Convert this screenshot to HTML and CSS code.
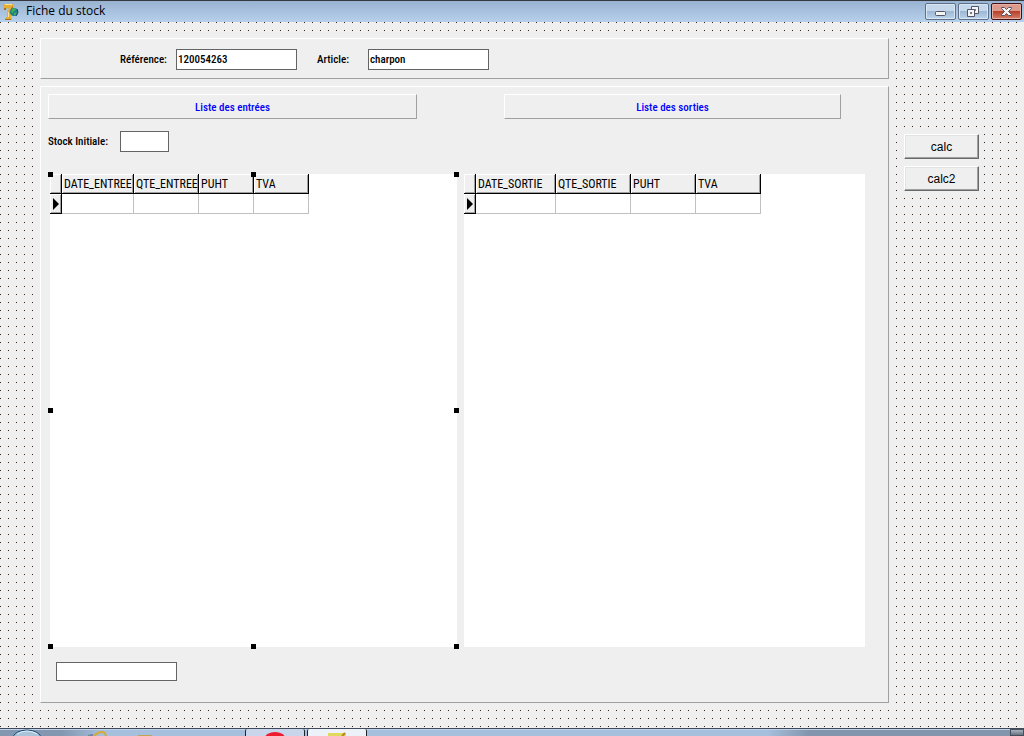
FILE: index.html
```html
<!DOCTYPE html>
<html lang="fr">
<head>
<meta charset="utf-8">
<title>Fiche du stock</title>
<link rel="stylesheet" href="styles.css">
</head>
<body>
<header class="titlebar">
  <svg class="app-icon" width="16" height="18" viewBox="0 0 16 18" aria-hidden="true">
    <path d="M1 1h9v4L8 10v4l1 1v2H2v-2l2-1 0-5 2-4H4L1 7z" fill="#e6ad35"/>
    <path d="M1 5h2v2H1zM9 4l1-1v2l-3 5H6zM2 16h6v1H2z" fill="#a8701c"/>
    <path d="M2 1h7v1H2zM5 9h1v5H5z" fill="#ffe38c"/>
    <circle cx="11" cy="9" r="4" fill="#1d7f88"/>
    <path d="M9 6l3-1 1 2-2 1-1 2-2-1zM11 10l3-1-1 3-2 0z" fill="#3fae5a"/>
    <path d="M14 6l1 3-2 4" fill="none" stroke="#1c3f80"/>
  </svg>
  <h1 class="title">Fiche du stock</h1>
  <div class="window-buttons">
    <button class="win-btn" type="button" aria-label="Réduire">
      <svg width="29" height="15" viewBox="0 0 29 15"><rect x="9.500" y="7.500" width="10" height="4" rx="1" fill="#f4f4f4" stroke="#535666"/></svg>
    </button>
    <button class="win-btn" type="button" aria-label="Restaurer">
      <svg width="29" height="15" viewBox="0 0 29 15" fill="#f4f4f4" fill-rule="evenodd" stroke="#535666"><path d="M12.500 2.500h7v7h-7zM15.500 5.500h1v1h-1z"/><path d="M8.500 5.500h7v7h-7zM11.500 8.500h1v1h-1z"/></svg>
    </button>
    <button class="win-btn win-close" type="button" aria-label="Fermer">
      <svg width="29" height="15" viewBox="0 0 29 15"><path d="M9.500 3.500h3l2 2 2-2h3v1l-3 3 3 3v1h-3l-2-2-2 2h-3v-1l3-3-3-3z" fill="#f4f4f4" stroke="#535666"/></svg>
    </button>
  </div>
</header>

<main class="form">
  <div class="panels">
    <section class="panel article-panel">
      <label class="ref-label" for="ref">Référence:</label>
      <input class="field" id="ref" type="text" value="120054263">
      <label class="art-label" for="art">Article:</label>
      <input class="field" id="art" type="text" value="charpon">
    </section>

    <section class="panel stock-panel">
      <div class="banners">
        <h2 class="panel banner">Liste des entrées</h2>
        <h2 class="panel banner">Liste des sorties</h2>
      </div>
      <div class="initial">
        <label class="initial-label" for="initial">Stock Initiale:</label>
        <input class="field field-small" id="initial" type="text">
      </div>
      <div class="grids">
        <div class="grid">
          <table class="table">
            <thead><tr><th class="c12"></th><th class="c72">DATE_ENTREE</th><th class="c65">QTE_ENTREE</th><th class="c55">PUHT</th><th class="c55">TVA</th></tr></thead>
            <tbody><tr><th class="c12"><svg class="arrow" width="8" height="12" viewBox="0 0 8 12" aria-hidden="true"><path d="M1 0l6 6-6 6z"/></svg></th><td></td><td></td><td></td><td></td></tr></tbody>
          </table>
          <i class="handle top left"></i><i class="handle top center"></i><i class="handle top right"></i>
          <i class="handle middle left"></i><i class="handle middle right"></i>
          <i class="handle bottom left"></i><i class="handle bottom center"></i><i class="handle bottom right"></i>
        </div>
        <div class="grid">
          <table class="table">
            <thead><tr><th class="c12"></th><th class="c80">DATE_SORTIE</th><th class="c75">QTE_SORTIE</th><th class="c65">PUHT</th><th class="c65">TVA</th></tr></thead>
            <tbody><tr><th class="c12"><svg class="arrow" width="8" height="12" viewBox="0 0 8 12" aria-hidden="true"><path d="M1 0l6 6-6 6z"/></svg></th><td></td><td></td><td></td><td></td></tr></tbody>
          </table>
        </div>
      </div>
      <input class="field result" type="text" aria-label="Résultat">
    </section>
  </div>

  <div class="actions">
    <button class="btn" type="button">calc</button>
    <button class="btn" type="button">calc2</button>
  </div>
</main>

<footer class="taskbar">
  <svg class="start" width="30" height="7" viewBox="0 0 30 7" aria-hidden="true"><ellipse cx="15" cy="9" rx="14" ry="8" fill="#a9c4d8" stroke="#1d4a78"/><path d="M5 5q10-6 20 0" fill="none" stroke="#dcebf5"/></svg>
  <svg class="browser" width="22" height="7" viewBox="0 0 22 7" aria-hidden="true"><path d="M0 7q3-1 5-1" fill="none" stroke="#6d87a8" stroke-width="2"/><path d="M6 7q6-6 11-3l1 3" fill="none" stroke="#d9a935" stroke-width="2"/></svg>
  <svg class="folder" width="16" height="7" viewBox="0 0 16 7" aria-hidden="true"><path d="M1 6h14v1H1z" fill="#c2a457"/></svg>
  <div class="task task-first"><svg width="20" height="7" viewBox="0 0 20 7" aria-hidden="true"><ellipse cx="10" cy="9" rx="10" ry="6" fill="#ee1c2e"/></svg></div>
  <div class="task task-active"><svg width="20" height="7" viewBox="0 0 20 7" aria-hidden="true"><path d="M1 4h18v3H1z" fill="#e0d95e"/><path d="M15 7l3-3" stroke="#b8861c" stroke-width="2"/></svg></div>
  <div class="show-desktop"></div>
</footer>
</body>
</html>
```
FILE: styles.css
```css
* { box-sizing: border-box; }

body {
  margin: 0;
  min-height: 100vh;
  display: flex;
  flex-direction: column;
  background: #efefef;
  color: #000;
  font: 500 11px/14px "Roboto Condensed", "Arial Narrow", "Liberation Sans", sans-serif;
}

.titlebar {
  display: flex;
  align-items: center;
  height: 22px;
  padding: 0 2px 0 3px;
  border-top: 1px solid #35383d;
  background: linear-gradient(#98b3d1, #b7d0ec);
}
.title {
  flex: 1;
  margin: 0 0 0 7px;
  padding-bottom: 2px;
  font: 12px/16px "Open Sans", "Noto Sans", sans-serif;
}
.window-buttons { display: flex; gap: 2px; }
.win-btn {
  width: 31px;
  height: 17px;
  padding: 0;
  border: 1px solid #61708a;
  border-radius: 2px;
  background: linear-gradient(#c4d7eb 45%, #9db8d5 50%, #bcd3ea);
  box-shadow: inset 0 0 0 1px #d9e6f4;
}
.win-btn svg { display: block; }
.win-close {
  border-color: #43101a;
  background: linear-gradient(#dd9a8c 45%, #b8402a 50%, #d3816a);
  box-shadow: inset 0 0 0 1px #e5b1a5;
}

.form {
  flex: 1;
  display: grid;
  grid-template-columns: 1fr 75px;
  gap: 15px;
  padding: 16px 45px 25px 40px;
  background-color: #efefef;
  background-image:
    linear-gradient(90deg, transparent 1px, #efefef 1px),
    linear-gradient(#3c2410 1px, #efefef 1px);
  background-size: 8px 8px;
}
.panels { display: flex; flex-direction: column; gap: 7px; }
.panel {
  border: 1px solid;
  border-color: #fff #a0a0a0 #a0a0a0 #fff;
  background: #efefef;
}
.article-panel {
  display: flex;
  align-items: center;
  padding: 10px 0 8px 79px;
}
.ref-label { width: 56px; }
.art-label { width: 51px; margin-left: 20px; }
.field {
  width: 121px;
  height: 21px;
  margin: 0;
  padding: 0 1px;
  border: 1px solid #646464;
  background: #fff;
  font: inherit;
}
.stock-panel {
  flex: 1;
  display: flex;
  flex-direction: column;
  padding: 7px 23px 21px 7px;
}
.banners {
  display: grid;
  grid-template-columns: 369fr 337fr;
  gap: 87px;
  margin-right: 24px;
}
.banner {
  margin: 0;
  height: 25px;
  color: #00f;
  font: inherit;
  line-height: 25px;
  text-align: center;
}
.initial { display: flex; align-items: center; margin: 12px 0 22px; }
.initial-label { width: 72px; }
.field-small { width: 49px; }

.grids {
  flex: 1;
  display: grid;
  grid-template-columns: 407fr 401fr;
  gap: 7px;
  margin-left: 2px;
}
.grid { position: relative; background: #fff; }
.table { border-collapse: separate; border-spacing: 0; table-layout: fixed; width: 0; }
.table th, .table td { height: 20px; padding: 0; }
.table th {
  padding-left: 2px;
  border: solid #000;
  border-width: 0 1px 1px 0;
  background: #efefef;
  box-shadow: inset 1px 1px #fff, inset -1px -1px #a0a0a0;
  font-weight: 400;
  font-size: 12px;
  text-align: left;
  white-space: nowrap;
}
.table td { border: solid #c0c0c0; border-width: 0 1px 1px 0; }
.c12 { width: 12px; }
.c55 { width: 55px; }
.c65 { width: 65px; }
.c72 { width: 72px; }
.c75 { width: 75px; }
.c80 { width: 80px; }
.arrow { display: block; }

.handle { position: absolute; width: 5px; height: 5px; background: #000; }
.top { top: -2px; }
.middle { top: calc(50% - 3px); }
.bottom { bottom: -2px; }
.left { left: -2px; }
.center { left: calc(50% - 3px); }
.right { right: -2px; }

.result { height: 19px; margin: 15px 0 0 8px; }

.actions { display: flex; flex-direction: column; gap: 7px; padding-top: 96px; }
.btn {
  height: 25px;
  padding: 0;
  border: 1px solid;
  border-color: #fff #696969 #696969 #fff;
  background: #efefef;
  box-shadow: inset -1px -1px #a0a0a0, inset 1px 1px #e3e3e3;
  color: #000;
  font: 12px/14px "Liberation Sans", sans-serif;
}

.taskbar {
  display: flex;
  height: 8px;
  border-top: 1px solid #3f4a5c;
  background: linear-gradient(90deg, #8397b0 6%, #a6bfdd 10%, #a6bfdd 75%, #8295ad 79%);
  box-shadow: inset 0 1px #c3d5ea;
}
.start { margin-left: 12px; }
.browser { margin-left: 46px; }
.folder { margin-left: 27px; }
.task {
  width: 60px;
  text-align: center;
  border: solid #20242c;
  border-width: 0 1px;
  border-radius: 2px 2px 0 0;
  background: #c9d5ea;
}
.task svg { display: block; margin: auto; }
.task-first { margin-left: 92px; }
.task-active { margin-left: 2px; background: #edf1f8; }
.show-desktop {
  width: 14px;
  margin-left: auto;
  border: 1px solid #454e5b;
  background: linear-gradient(#aab4c0, #66717f);
}
```
